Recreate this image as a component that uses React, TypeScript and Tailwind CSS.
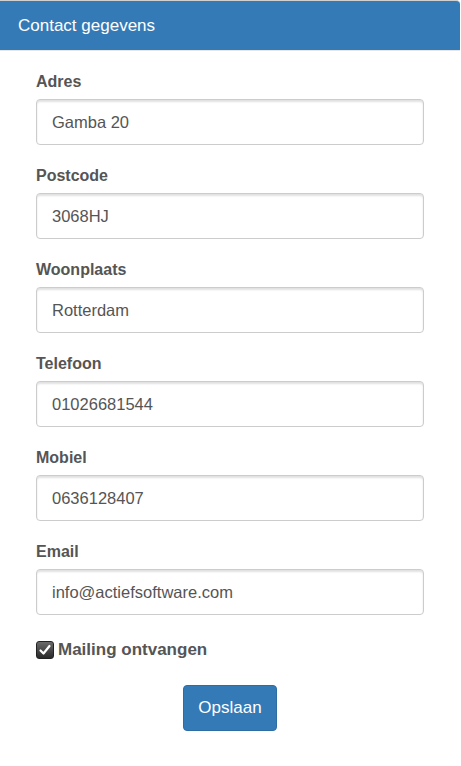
import { useState } from "react"

const fields = [
  { label: "Adres", value: "Gamba 20" },
  { label: "Postcode", value: "3068HJ" },
  { label: "Woonplaats", value: "Rotterdam" },
  { label: "Telefoon", value: "01026681544" },
  { label: "Mobiel", value: "0636128407" },
  { label: "Email", value: "info@actiefsoftware.com" },
]

export default function App() {
  const [mailing, setMailing] = useState(true)

  return (
    <div className="min-h-[766px] w-[460px] bg-white font-['Liberation_Sans',Arial,sans-serif] text-[#555]">
      <div className="flex h-[50px] items-center rounded-tr-[4px] border-t border-[#d0d0d0] bg-[#337ab7] pl-[18px] text-[17px] text-white">
        Contact gegevens
      </div>
      <div className="border-t border-[#e6e6e6] pl-[36px] pr-[36px] pt-[20px]">
        {fields.map((f) => (
          <div key={f.label} className="mb-[20px]">
            <label className="mb-[6px] block h-[22px] text-[16px] leading-[22px] font-bold text-[#555]">
              {f.label}
            </label>
            <input
              defaultValue={f.value}
              className="block h-[46px] w-[388px] rounded-[4px] border border-[#ccc] px-[15px] text-[16.5px] text-[#555] shadow-[inset_0_2px_2px_rgba(0,0,0,0.12)] outline-none"
            />
          </div>
        ))}
        <label className="flex h-[26px] items-center gap-[4px] pt-[4px] text-[17px] font-bold text-[#555]">
          <span
            onClick={() => setMailing(!mailing)}
            className="flex h-[18px] w-[18px] items-center justify-center rounded-[3px] border border-[#222] bg-gradient-to-b from-[#6a6a6a] to-[#2a2a2a]"
          >
            {mailing && (
              <svg width="14" height="14" viewBox="0 0 14 14">
                <path d="M2.5 7.5 L5.5 10.5 L11.5 3" fill="none" stroke="white" strokeWidth="2.2" strokeLinecap="round" strokeLinejoin="round" />
              </svg>
            )}
          </span>
          Mailing ontvangen
        </label>
        <div className="flex justify-center pt-[24px]">
          <button className="h-[46px] w-[94px] rounded-[4px] border border-[#2e6da4] bg-[#337ab7] text-[17px] text-white">
            Opslaan
          </button>
        </div>
      </div>
    </div>
  )
}
